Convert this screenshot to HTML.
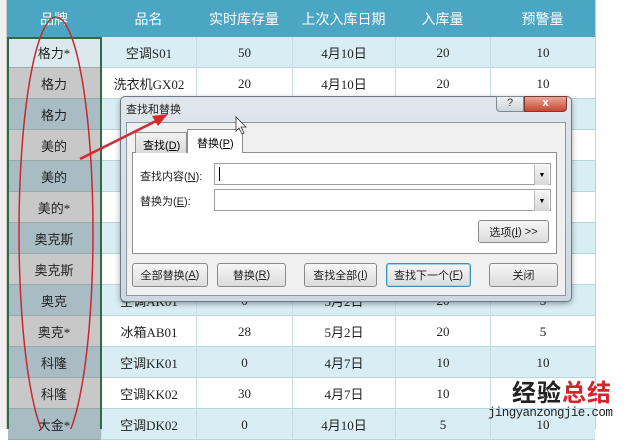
<!DOCTYPE html>
<html><head><meta charset="utf-8"><style>
*{margin:0;padding:0;box-sizing:border-box}
body{width:640px;height:429px;overflow:hidden;background:#fff;position:relative;font-family:"Liberation Sans","Noto Sans CJK SC",sans-serif;}
.a{position:absolute}
.c{position:absolute;display:flex;align-items:center;justify-content:center;font-size:13px;color:#222;font-family:"Liberation Serif","Noto Sans CJK SC",serif}
.h{color:#fff;font-family:"Liberation Sans","Noto Sans CJK SC",sans-serif;font-size:14px}
.btn{position:absolute;top:263px;height:24px;border:1px solid #8a8a8a;border-radius:3px;background:linear-gradient(#f6f6f6,#dcdcdc);font-size:11px;display:flex;align-items:center;justify-content:center;color:#222}
.dd{position:absolute;width:15px;height:20px;right:1px;top:1px;background:linear-gradient(#f4f4f4,#d8d8d8);border-left:1px solid #bbb;font-size:7px;display:flex;align-items:center;justify-content:center}
.lbl{position:absolute;font-size:11px;color:#222}
</style></head><body>
<div class="a" style="left:0;top:0;width:7px;height:429px;background:#f0f0f0;border-right:1px solid #ccc"></div>
<div class="a" style="left:7px;top:0;width:588px;height:37px;background:#4aa6c2"></div>
<div id="t"></div>
<script>
var cols=[7,101,196,292,395,490,595];
var heads=["品牌","品名","实时库存量","上次入库日期","入库量","预警量"];
var rows=[["格力*","空调S01","50","4月10日","20","10"],["格力","洗衣机GX02","20","4月10日","20","10"],["格力","","","","",""],["美的","","","","",""],["美的","","","","",""],["美的*","","","","",""],["奥克斯","","","","",""],["奥克斯","","","","",""],["奥克","空调AK01","0","5月2日","20","5"],["奥克*","冰箱AB01","28","5月2日","20","5"],["科隆","空调KK01","0","4月7日","10","10"],["科隆","空调KK02","30","4月7日","10","10"],["大金*","空调DK02","0","4月10日","5","10"]];
var h="";
for(var i=0;i<6;i++)h+='<div class="c h" style="left:'+cols[i]+'px;top:0;width:'+(cols[i+1]-cols[i])+'px;height:37px">'+heads[i]+'</div>';
for(var r=0;r<13;r++){var y=37+r*31;var bg=r%2==0?"#d9eef4":"#fff";
h+='<div class="a" style="left:101px;top:'+y+'px;width:494px;height:31px;background:'+bg+';border-bottom:1px solid #b8d4dc"></div>';
h+='<div class="a" style="left:8px;top:'+y+'px;width:93px;height:31px;background:'+(r==0?"#dbe9ee":(r%2==0?"#a9bcc4":"#c8c8c8"))+';border-bottom:1px solid #9aa"></div>';
for(var c=0;c<6;c++){h+='<div class="c" style="left:'+cols[c]+'px;top:'+y+'px;width:'+(cols[c+1]-cols[c])+'px;height:31px;'+(c>0?'border-left:1px solid #c8dde3':'')+'">'+rows[r][c]+'</div>';}}
document.getElementById("t").innerHTML=h;
</script>
<div class="a" style="left:7px;top:37px;width:95px;height:31px;border:2px solid #2e6b44;border-bottom:none"></div>
<div class="a" style="left:7px;top:37px;width:2px;height:392px;background:#2e6b44"></div>
<div class="a" style="left:100px;top:37px;width:2px;height:392px;background:#2e6b44"></div>
<div class="a" style="left:595px;top:0;width:1px;height:429px;background:#b8d4dc"></div>
<!-- dialog -->
<div class="a" style="left:120px;top:96px;width:452px;height:206px;background:linear-gradient(#dfe6ec,#cdd8e0);border:1px solid #6d7a85;border-radius:5px;box-shadow:0 2px 6px rgba(0,0,0,.35)"></div>
<div class="lbl" style="left:126px;top:101px;font-size:11px">查找和替换</div>
<div class="a" style="left:496px;top:96px;width:28px;height:16px;background:linear-gradient(#eef2f5,#cdd6dd);border:1px solid #7d8a95;border-radius:0 0 0 4px;font-size:11px;text-align:center;color:#333">?</div>
<div class="a" style="left:524px;top:96px;width:43px;height:16px;background:linear-gradient(#e8a79b,#c8452f);border:1px solid #7a3a30;border-radius:0 0 4px 0;font-size:11px;font-weight:bold;text-align:center;color:#fff">x</div>
<div class="a" style="left:126px;top:122px;width:440px;height:174px;background:#f0f0f0;border:1px solid #8c99a4"></div>
<div class="a" style="left:132px;top:152px;width:425px;height:102px;background:#fff;border:1px solid #8e8f8f"></div>
<div class="a" style="left:135px;top:132px;width:52px;height:21px;background:linear-gradient(#f2f2f2,#dadada);border:1px solid #8e8f8f;border-bottom:none;font-size:11px;padding:4px 0 0 7px">查找(<u>D</u>)</div>
<div class="a" style="left:187px;top:129px;width:56px;height:24px;background:#fff;border:1px solid #8e8f8f;border-bottom:none;font-size:11px;padding:5px 0 0 9px">替换(<u>P</u>)</div>
<div class="lbl" style="left:140px;top:168px">查找内容(<u>N</u>):</div>
<div class="lbl" style="left:140px;top:193px">替换为(<u>E</u>):</div>
<div class="a" style="left:214px;top:163px;width:337px;height:22px;border:1px solid #a0a0a0;background:#fff"><div class="a" style="left:4px;top:3px;width:1px;height:14px;background:#000"></div><div class="dd">▼</div></div>
<div class="a" style="left:214px;top:189px;width:337px;height:22px;border:1px solid #a0a0a0;background:#fff"><div class="dd">▼</div></div>
<div class="btn" style="left:478px;top:220px;width:71px;height:23px">选项(<u>I</u>) &gt;&gt;</div>
<div class="btn" style="left:132px;width:76px">全部替换(<u>A</u>)</div>
<div class="btn" style="left:217px;width:69px">替换(<u>R</u>)</div>
<div class="btn" style="left:304px;width:73px">查找全部(<u>I</u>)</div>
<div class="btn" style="left:386px;width:85px;border:1px solid #3c8fbf;box-shadow:inset 0 0 0 1px #9ed4f0">查找下一个(<u>F</u>)</div>
<div class="btn" style="left:489px;width:69px">关闭</div>
<!-- annotations -->
<svg class="a" style="left:0;top:0" width="640" height="429">
<ellipse cx="56" cy="232" rx="37" ry="215" fill="none" stroke="#c8282e" stroke-width="1.5"/>
<line x1="80" y1="159" x2="160" y2="119" stroke="#d8282e" stroke-width="2.5"/>
<polygon points="168,114 152,116 158,126" fill="#d8282e"/>
<path d="M236 117 L236 131 L239 128 L242 134 L244 133 L241 127 L246 127 Z" fill="#fff" stroke="#333" stroke-width="0.8"/>
</svg>
<div class="a" style="left:512px;top:376px;font-size:24px;line-height:30px;font-weight:bold;color:#222;font-family:'Noto Sans CJK SC',sans-serif;letter-spacing:1px">经验<span style="color:#d0262c">总结</span></div>
<div class="a" style="left:488px;top:405px;font-size:12.5px;line-height:16px;color:#222;font-family:'Liberation Mono',monospace;letter-spacing:-0.6px">jingyanzongjie.com</div>
</body></html>
